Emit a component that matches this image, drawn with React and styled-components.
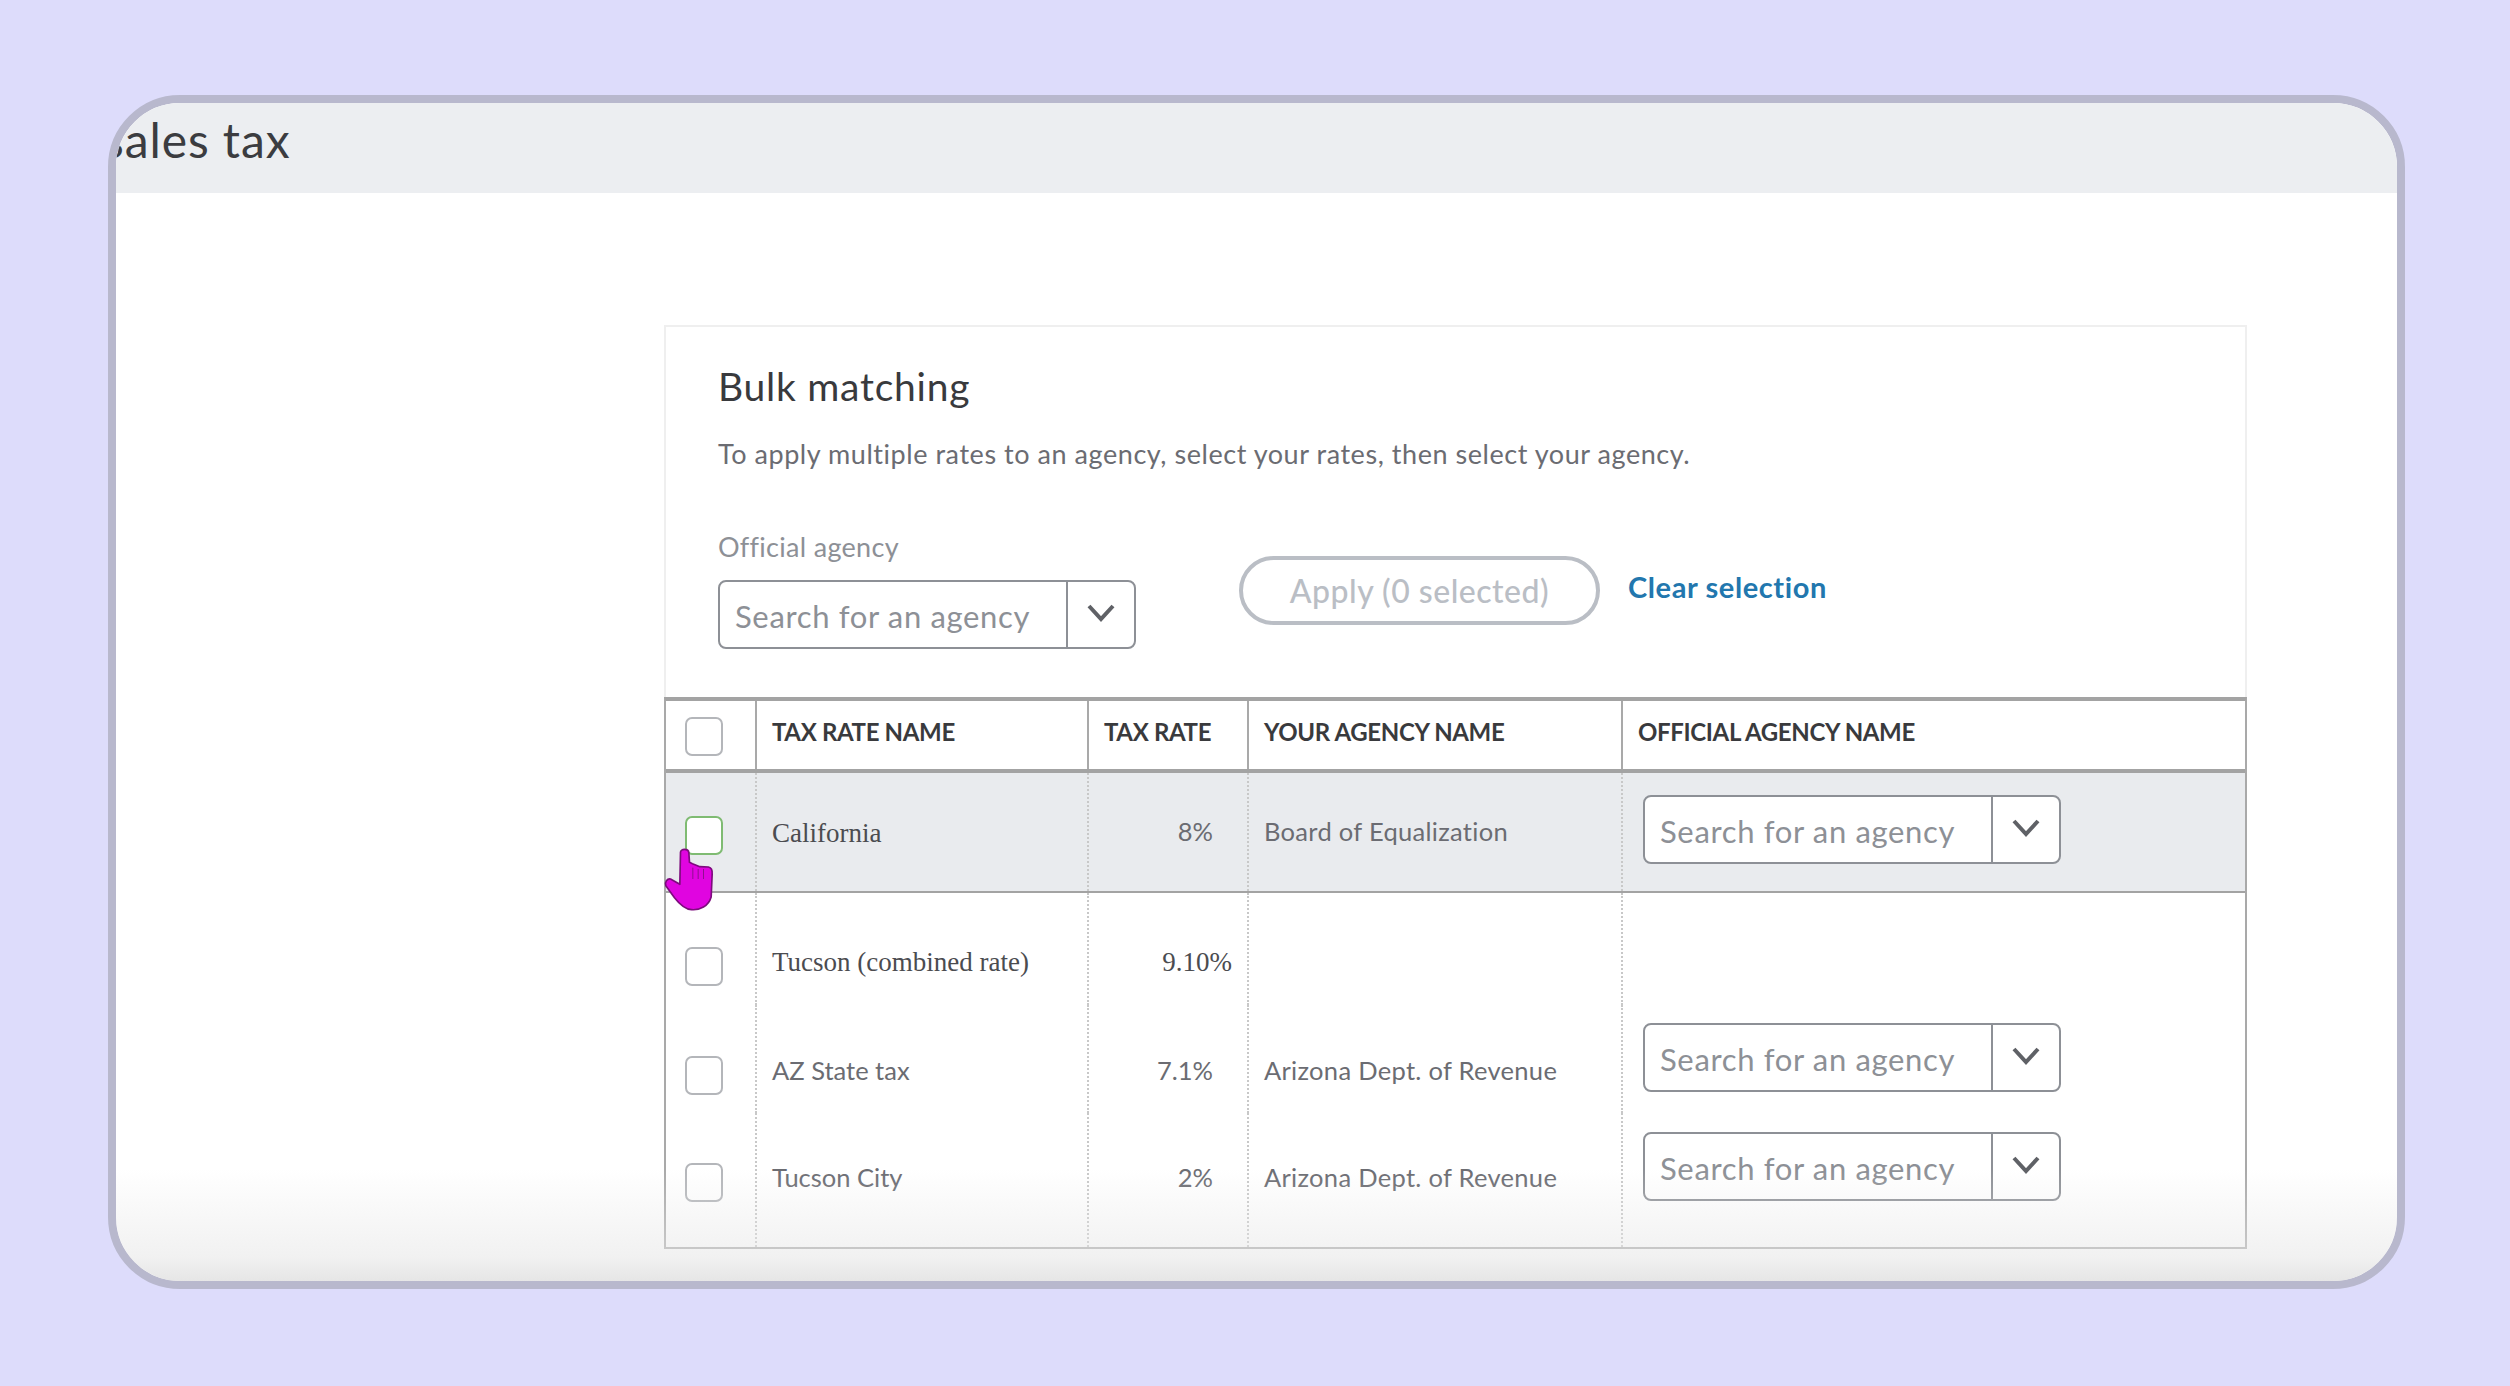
import React from "react";
import styled, { createGlobalStyle } from "styled-components";

const GlobalStyle = createGlobalStyle`
  html, body { margin: 0; padding: 0; background: #dddcfb; }
  * { box-sizing: border-box; }
  body { font-family: Lato, "Open Sans", "Liberation Sans", sans-serif; }
`;

const Page = styled.div`
  width: 2510px;
  height: 1386px;
  padding: 95px 0 0 108px;
  overflow: hidden;
`;

const Frame = styled.div`
  position: relative;
  width: 2297px;
  height: 1194px;
  border: 8px solid #b8b8cd;
  border-radius: 72px;
  background: #fff;
  overflow: hidden;
`;

const BottomFade = styled.div`
  position: absolute;
  left: 0;
  right: 0;
  bottom: 0;
  height: 112px;
  background: linear-gradient(to bottom, rgba(230, 230, 230, 0) 0%, rgba(230, 230, 230, 0.35) 50%, rgba(230, 230, 230, 0.55) 78%, rgba(230, 230, 230, 1) 100%);
  pointer-events: none;
`;

const TopBand = styled.header`
  height: 90px;
  background: #eceef1;
  padding: 8px 0 0 0;
  overflow: hidden;
`;

const PageTitle = styled.h1`
  margin: 0 0 0 -13px;
  font-size: 48px;
  line-height: 58px;
  font-weight: 400;
  color: #3b3c40;
  letter-spacing: 0.9px;
`;

const Content = styled.main`
  padding: 132px 0 0 548px;
`;

const Card = styled.section`
  width: 1583px;
`;

const Intro = styled.div`
  height: 372px;
  border: 2px solid #efefef;
  border-bottom: 0;
  padding: 36px 0 0 52px;
`;

const CardTitle = styled.h2`
  margin: 0;
  font-size: 39px;
  line-height: 46px;
  font-weight: 400;
  color: #393a3d;
  letter-spacing: 0.75px;
`;

const Description = styled.p`
  margin: 28px 0 0;
  font-size: 27px;
  line-height: 34px;
  font-weight: 400;
  color: #6b6c72;
  letter-spacing: 0.55px;
`;

const FormRow = styled.div`
  display: flex;
  align-items: flex-start;
  margin-top: 59px;
`;

const Field = styled.div`
  width: 418px;
`;

const FieldLabel = styled.div`
  font-size: 27px;
  line-height: 34px;
  color: #8d9096;
  letter-spacing: 0.3px;
  margin-bottom: 16px;
`;

const Select = styled.div`
  display: flex;
  width: 418px;
  height: 69px;
  background: #fff;
  border: 2px solid #8d9096;
  border-radius: 8px;
`;

const SelectText = styled.span`
  flex: 1;
  padding: 14px 0 0 15px;
  font-size: 31px;
  line-height: 40px;
  color: #8d9096;
  letter-spacing: 0.65px;
  white-space: nowrap;
`;

const SelectArrow = styled.span`
  width: 68px;
  border-left: 2px solid #8d9096;
  display: flex;
  align-items: center;
  justify-content: center;
  padding-bottom: 3px;
`;

const Chevron = () => (
  <svg width="30" height="18" viewBox="0 0 30 18" aria-hidden="true">
    <polyline points="3,2 15,15 27,2" fill="none" stroke="#5f6166" strokeWidth="4" />
  </svg>
);

const ApplyButton = styled.button`
  width: 361px;
  height: 69px;
  margin: 26px 0 0 103px;
  border: 4px solid #babec5;
  border-radius: 35px;
  background: #fff;
  font-family: inherit;
  font-size: 32px;
  font-weight: 500;
  color: #babec5;
  letter-spacing: 0.5px;
  padding: 0;
`;

const ClearLink = styled.a`
  margin: 39px 0 0 28px;
  font-size: 29px;
  line-height: 36px;
  font-weight: 700;
  color: #2277ae;
  letter-spacing: 0.6px;
`;

const Table = styled.div`
  position: relative;
  border-left: 2px solid #a9a9a9;
  border-right: 2px solid #a9a9a9;
  border-bottom: 2px solid #a9a9a9;
  border-top: 4px solid #a3a3a3;
`;

const Row = styled.div`
  display: grid;
  grid-template-columns: 91px 332px 160px 374px 1fr;
  height: ${(p) => p.$h}px;
  background: ${(p) => (p.$active ? "#e9ebee" : "transparent")};
  border-bottom: ${(p) => (p.$line ? `${p.$line}px solid #a3a3a3` : "0")};
`;

const HeadCell = styled.div`
  border-right: ${(p) => (p.$last ? "0" : "2px solid #a9a9a9")};
  padding: ${(p) => (p.$check ? "16px 0 0 19px" : "15px 0 0 15px")};
  font-size: 24px;
  line-height: 32px;
  font-weight: 700;
  color: #393a3d;
  white-space: nowrap;
  letter-spacing: -0.35px;
`;

const Cell = styled.div`
  border-right: ${(p) => (p.$last ? "0" : "2px dotted #c8c8c8")};
  padding-top: ${(p) => p.$top}px;
  padding-left: ${(p) => (p.$check ? "19px" : p.$last ? "20px" : "15px")};
  padding-right: ${(p) => p.$pr || 0}px;
  text-align: ${(p) => (p.$pr ? "right" : "left")};
  font-size: 25.5px;
  line-height: 36px;
  color: #6b6c72;
  white-space: nowrap;
`;

const SerifText = styled.span`
  font-family: "Liberation Serif", serif;
  font-size: 27px;
  color: #4b4c50;
`;

const SansText = styled.span`
  letter-spacing: ${(p) => p.$ls || 0}px;
`;

const Checkbox = styled.span`
  display: block;
  width: 38px;
  height: 39px;
  background: #fff;
  border: 2px solid ${(p) => (p.$focus ? "#7fbb72" : "#b4b6ba")};
  border-radius: 7px;
`;

const Pointer = styled.svg`
  position: absolute;
  left: -3px;
  top: 146px;
  width: 52px;
  height: 65px;
`;

const Hand = () => (
  <Pointer viewBox="40 140 155 195" aria-hidden="true">
    <path
      d="M92 156 C92 144 116 144 117 157 L119 186 L128 190 L150 199 L176 200 C186 202 188 210 187 222 L184 290 C176 318 150 330 125 328 C103 326 88 310 74 292 L48 256 C44 246 52 234 62 236 L90 252 Z"
      fill="#e005e0"
      stroke="#7d0b7d"
      strokeWidth="5"
      strokeLinejoin="round"
    />
    <path d="M129 202 V236 M145 206 V236 M161 206 V236" stroke="#8f0f8f" strokeWidth="3" fill="none" />
  </Pointer>
);

const rows = [
  { name: "California", serif: true, rate: "8%", ratePad: 34, agency: "Board of Equalization", h: 120, line: 2, active: true, c: 43, t: 41, st: 40, s: 22 },
  { name: "Tucson (combined rate)", serif: true, rate: "9.10%", rateSerif: true, ratePad: 15, agency: "", h: 112, c: 54, t: 50, st: 50 },
  { name: "AZ State tax", rate: "7.1%", ratePad: 34, agency: "Arizona Dept. of Revenue", h: 108, c: 51, t: 46, st: 47, s: 18 },
  { name: "Tucson City", rate: "2%", ratePad: 34, agency: "Arizona Dept. of Revenue", h: 134, c: 50, t: 46, st: 46, s: 19 },
];

const AgencySelect = () => (
  <Select>
    <SelectText>Search for an agency</SelectText>
    <SelectArrow>
      <Chevron />
    </SelectArrow>
  </Select>
);

export default function App() {
  return (
    <Page>
      <GlobalStyle />
      <Frame>
        <TopBand>
          <PageTitle>sales tax</PageTitle>
        </TopBand>
        <Content>
          <Card>
            <Intro>
              <CardTitle>Bulk matching</CardTitle>
              <Description>To apply multiple rates to an agency, select your rates, then select your agency.</Description>
              <FormRow>
                <Field>
                  <FieldLabel>Official agency</FieldLabel>
                  <AgencySelect />
                </Field>
                <ApplyButton>Apply (0 selected)</ApplyButton>
                <ClearLink>Clear selection</ClearLink>
              </FormRow>
            </Intro>
            <Table>
              <Row $h={72} $line={4}>
                <HeadCell $check>
                  <Checkbox />
                </HeadCell>
                <HeadCell>TAX RATE NAME</HeadCell>
                <HeadCell>TAX RATE</HeadCell>
                <HeadCell>YOUR AGENCY NAME</HeadCell>
                <HeadCell $last>OFFICIAL AGENCY NAME</HeadCell>
              </Row>
              {rows.map((r, i) => (
                <Row key={r.name} $h={r.h} $line={r.line} $active={r.active}>
                  <Cell $check $top={r.c}>
                    <Checkbox $focus={i === 0} />
                  </Cell>
                  <Cell $top={r.serif ? r.t : r.st}>
                    {r.serif ? <SerifText>{r.name}</SerifText> : <SansText>{r.name}</SansText>}
                  </Cell>
                  <Cell $pr={r.ratePad} $top={r.rateSerif ? r.t : r.st}>
                    {r.rateSerif ? <SerifText>{r.rate}</SerifText> : <SansText>{r.rate}</SansText>}
                  </Cell>
                  <Cell $top={r.st}>
                    <SansText $ls={0.3}>{r.agency}</SansText>
                  </Cell>
                  <Cell $last $top={r.s || 0}>
                    {r.s ? <AgencySelect /> : null}
                  </Cell>
                </Row>
              ))}
              <Hand />
            </Table>
          </Card>
        </Content>
        <BottomFade />
      </Frame>
    </Page>
  );
}
